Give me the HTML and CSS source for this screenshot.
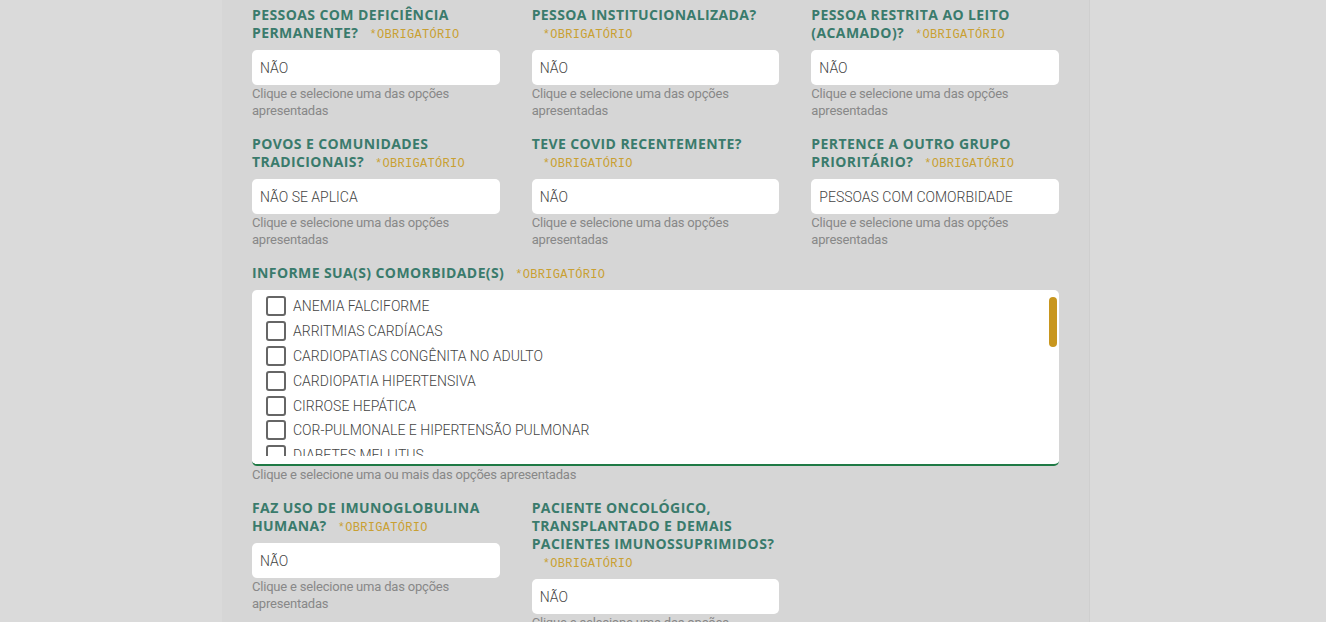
FILE: index.html
```html
<!DOCTYPE html>
<html lang="pt-BR">
<head>
    <meta charset="UTF-8">
    <meta name="viewport" content="width=device-width, initial-scale=1.0">
    <title>Cadastro - Grupos prioritários</title>
    <link rel="stylesheet" href="styles.css">
</head>
<body>
    <div class="panel">
        <div class="grid">
            <div class="field">
                <label class="label">PESSOAS COM DEFICIÊNCIA PERMANENTE?<span class="req">*OBRIGATÓRIO</span></label>
                <div class="select">NÃO</div>
                <p class="help">Clique e selecione uma das opções apresentadas</p>
            </div>
            <div class="field">
                <label class="label">PESSOA INSTITUCIONALIZADA?<span class="req">*OBRIGATÓRIO</span></label>
                <div class="select">NÃO</div>
                <p class="help">Clique e selecione uma das opções apresentadas</p>
            </div>
            <div class="field">
                <label class="label">PESSOA RESTRITA AO LEITO (ACAMADO)?<span class="req">*OBRIGATÓRIO</span></label>
                <div class="select">NÃO</div>
                <p class="help">Clique e selecione uma das opções apresentadas</p>
            </div>

            <div class="field">
                <label class="label">POVOS E COMUNIDADES TRADICIONAIS?<span class="req">*OBRIGATÓRIO</span></label>
                <div class="select">NÃO SE APLICA</div>
                <p class="help">Clique e selecione uma das opções apresentadas</p>
            </div>
            <div class="field">
                <label class="label">TEVE COVID RECENTEMENTE?<span class="req">*OBRIGATÓRIO</span></label>
                <div class="select">NÃO</div>
                <p class="help">Clique e selecione uma das opções apresentadas</p>
            </div>
            <div class="field">
                <label class="label">PERTENCE A OUTRO GRUPO PRIORITÁRIO?<span class="req">*OBRIGATÓRIO</span></label>
                <div class="select">PESSOAS COM COMORBIDADE</div>
                <p class="help">Clique e selecione uma das opções apresentadas</p>
            </div>

            <div class="field wide">
                <label class="label">INFORME SUA(S) COMORBIDADE(S)<span class="req">*OBRIGATÓRIO</span></label>
                <div class="checklist">
                    <ul class="options">
                        <li><span class="box"></span>ANEMIA FALCIFORME</li>
                        <li><span class="box"></span>ARRITMIAS CARDÍACAS</li>
                        <li><span class="box"></span>CARDIOPATIAS CONGÊNITA NO ADULTO</li>
                        <li><span class="box"></span>CARDIOPATIA HIPERTENSIVA</li>
                        <li><span class="box"></span>CIRROSE HEPÁTICA</li>
                        <li><span class="box"></span>COR-PULMONALE E HIPERTENSÃO PULMONAR</li>
                        <li><span class="box"></span>DIABETES MELLITUS</li>
                    </ul>
                    <div class="thumb"></div>
                </div>
                <p class="help">Clique e selecione uma ou mais das opções apresentadas</p>
            </div>

            <div class="field">
                <label class="label">FAZ USO DE IMUNOGLOBULINA HUMANA?<span class="req">*OBRIGATÓRIO</span></label>
                <div class="select">NÃO</div>
                <p class="help">Clique e selecione uma das opções apresentadas</p>
            </div>
            <div class="field">
                <label class="label">PACIENTE ONCOLÓGICO, TRANSPLANTADO E DEMAIS PACIENTES IMUNOSSUPRIMIDOS?<span class="req">*OBRIGATÓRIO</span></label>
                <div class="select">NÃO</div>
                <p class="help">Clique e selecione uma das opções apresentadas</p>
            </div>
        </div>
    </div>
</body>
</html>
```

FILE: styles.css
```css
body {
    margin: 0;
    background: #dadada;
    font-family: Roboto, 'Liberation Sans', sans-serif;
    overflow: hidden;
    height: 622px;
}

.panel {
    width: 868px;
    margin-left: 222px;
    min-height: 622px;
    background: #d6d6d6;
    border-right: 1px solid #cfcfcf;
    padding: 6px 30px 0 30px;
    box-sizing: border-box;
}

.grid {
    display: grid;
    grid-template-columns: repeat(3, 1fr);
    column-gap: 32px;
    row-gap: 16px;
}

.field {
    display: flex;
    flex-direction: column;
    align-items: stretch;
}

.wide {
    grid-column: 1 / 4;
}

.label {
    font-family: 'Open Sans', sans-serif;
    font-weight: 700;
    font-size: 14px;
    line-height: 18px;
    letter-spacing: 0.4px;
    color: #3a7b6c;
    margin-bottom: 8px;
}

.req {
    display: inline-block;
    margin-left: 11px;
    font-family: 'Liberation Mono', monospace;
    font-weight: 400;
    font-size: 12px;
    line-height: 14px;
    letter-spacing: 0.3px;
    color: #c9a032;
}

.select {
    height: 35px;
    background: #fff;
    border-radius: 5px;
    padding: 0 8px;
    display: flex;
    align-items: center;
    font-size: 14px;
    font-weight: 300;
    color: #444;
}

.help {
    margin: 0;
    font-size: 13px;
    line-height: 17px;
    letter-spacing: -0.2px;
    color: #888;
}

.checklist {
    position: relative;
    height: 174px;
    background: #fff;
    border-radius: 5px;
    border-bottom: 2px solid #1f7a45;
    overflow: hidden;
}

.options {
    list-style: none;
    margin: 0;
    height: 166px;
    overflow: hidden;
    box-sizing: border-box;
    padding: 4px 14px 0;
}

.options li {
    display: flex;
    align-items: center;
    height: 24.8px;
    font-size: 14px;
    font-weight: 300;
    color: #444;
}

.box {
    width: 16px;
    height: 16px;
    border: 2px solid #666;
    border-radius: 3px;
    margin-right: 7px;
    flex: none;
}

.thumb {
    position: absolute;
    top: 7px;
    right: 2px;
    width: 8px;
    height: 50px;
    border-radius: 4px;
    background: #c8961e;
}
```
